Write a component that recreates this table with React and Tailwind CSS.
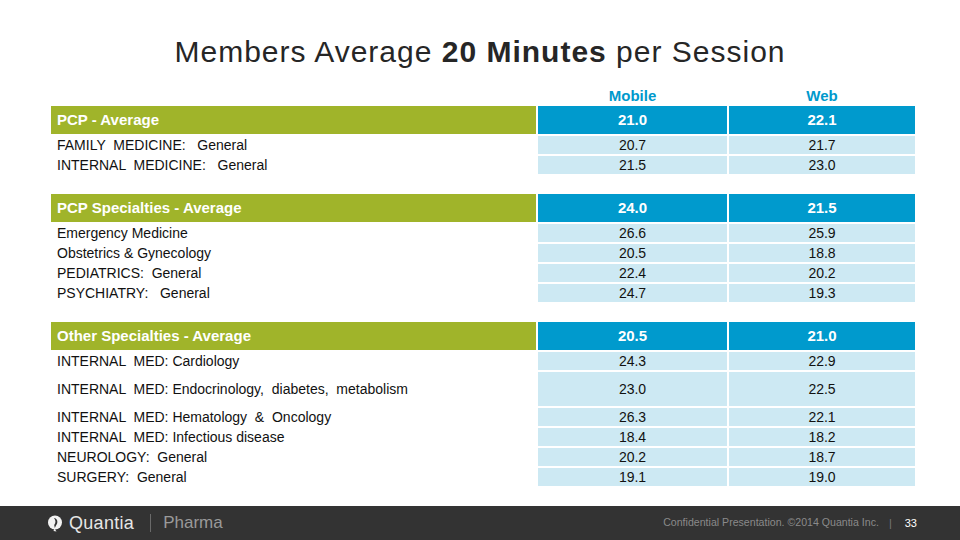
import React from 'react';

const sections = [
  {
    title: 'PCP - Average',
    mobile: '21.0',
    web: '22.1',
    rows: [
      { label: 'FAMILY  MEDICINE:   General', mobile: '20.7', web: '21.7' },
      { label: 'INTERNAL  MEDICINE:   General', mobile: '21.5', web: '23.0' },
    ],
  },
  {
    title: 'PCP Specialties - Average',
    mobile: '24.0',
    web: '21.5',
    rows: [
      { label: 'Emergency Medicine', mobile: '26.6', web: '25.9' },
      { label: 'Obstetrics & Gynecology', mobile: '20.5', web: '18.8' },
      { label: 'PEDIATRICS:  General', mobile: '22.4', web: '20.2' },
      { label: 'PSYCHIATRY:   General', mobile: '24.7', web: '19.3' },
    ],
  },
  {
    title: 'Other Specialties - Average',
    mobile: '20.5',
    web: '21.0',
    rows: [
      { label: 'INTERNAL  MED: Cardiology', mobile: '24.3', web: '22.9' },
      { label: 'INTERNAL  MED: Endocrinology,  diabetes,  metabolism', mobile: '23.0', web: '22.5', tall: true },
      { label: 'INTERNAL  MED: Hematology  &  Oncology', mobile: '26.3', web: '22.1' },
      { label: 'INTERNAL  MED: Infectious disease', mobile: '18.4', web: '18.2' },
      { label: 'NEUROLOGY:  General', mobile: '20.2', web: '18.7' },
      { label: 'SURGERY:  General', mobile: '19.1', web: '19.0' },
    ],
  },
];

const Section = ({ title, mobile, web, rows }) => (
  <div className="grid grid-cols-[485px_189px_186px] gap-[2px] mt-[20px]">
    <div className="h-[28px] bg-[#a0b42a] text-white font-bold text-[15px] flex items-center pl-[6px]">{title}</div>
    <div className="h-[28px] bg-[#009acd] text-white font-bold text-[15px] flex items-center justify-center">{mobile}</div>
    <div className="h-[28px] bg-[#009acd] text-white font-bold text-[15px] flex items-center justify-center">{web}</div>
    {rows.map((r, i) => (
      <React.Fragment key={i}>
        <div className={`${r.tall ? 'h-[34px]' : 'h-[18px]'} flex items-center pl-[6px] text-[14px] text-[#111] whitespace-pre`}>{r.label}</div>
        <div className={`${r.tall ? 'h-[34px]' : 'h-[18px]'} bg-[#cde9f3] flex items-center justify-center text-[14px] text-[#111]`}>{r.mobile}</div>
        <div className={`${r.tall ? 'h-[34px]' : 'h-[18px]'} bg-[#cde9f3] flex items-center justify-center text-[14px] text-[#111]`}>{r.web}</div>
      </React.Fragment>
    ))}
  </div>
);

const Logo = () => (
  <svg width="14" height="17" viewBox="0 0 14 17">
    <circle cx="7" cy="7.5" r="7" fill="#f2f2f2" />
    <path d="M6 3 C9.5 3.5 10.5 7.5 8 10.5 L6.8 13 L6.2 10 C8 8 7.8 5.2 6 3 Z" fill="#333" />
    <path d="M6.5 13.5 L8.5 16.5 L5.5 16 Z" fill="#f2f2f2" />
  </svg>
);

export default function App() {
  return (
    <div className="w-[960px] h-[540px] bg-white flex flex-col font-['Liberation_Sans',Arial,sans-serif] overflow-hidden">
      <div className="pt-[35px] text-center text-[30px] leading-[34px] tracking-[1px] text-[#262626]">
        Members Average <span className="font-bold">20 Minutes</span> per Session
      </div>
      <div className="pl-[51px] flex-1">
        <div className="grid grid-cols-[485px_189px_186px] gap-[2px] mt-[19px] h-[16px] text-[15px] font-bold text-[#0099cc] leading-[16px]">
          <div />
          <div className="text-center">Mobile</div>
          <div className="text-center">Web</div>
        </div>
        <div className="-mt-[18px]">
          {sections.map((s, i) => (
            <Section key={i} {...s} />
          ))}
        </div>
      </div>
      <div className="h-[34px] bg-[#333333] flex items-center pl-[48px] pr-[43px]">
        <div className="flex items-center gap-[7px]">
          <Logo />
          <span className="text-[18px] text-[#e6e6e6] tracking-[0.3px]">Quantia</span>
        </div>
        <div className="w-px h-[18px] bg-[#6a6a6a] ml-[16px] mr-[12px]" />
        <span className="text-[17px] text-[#9a9a9a]">Pharma</span>
        <div className="flex-1" />
        <span className="text-[10.6px] text-[#8a8a8a]">Confidential Presentation. ©2014 Quantia Inc.</span>
        <span className="text-[11px] text-[#777] ml-[10px] mr-[13px]">|</span>
        <span className="text-[11px] text-white">33</span>
      </div>
    </div>
  );
}
